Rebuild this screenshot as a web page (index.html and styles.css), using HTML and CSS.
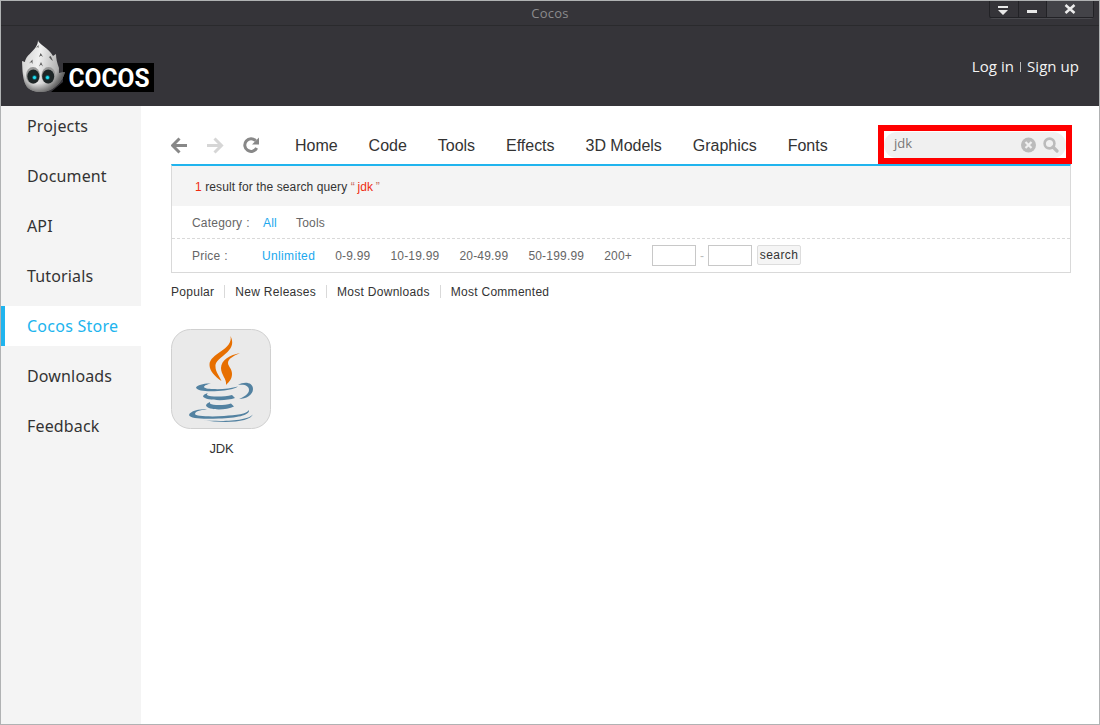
FILE: index.html
```html
<!DOCTYPE html>
<html lang="en">
<head>
<meta charset="utf-8">
<title>Cocos</title>
<link rel="stylesheet" href="styles.css">
</head>
<body>
<div class="window">
  <header class="top">
    <div class="titlebar">
      <span class="title">Cocos</span>
      <div class="controls">
        <span class="ctl"><svg width="28" height="16" viewBox="0 0 28 16"><path d="M8 5h10v2H8zM8 9h10l-5 5z" fill="#e8e8e8"/></svg></span>
        <span class="ctl"><svg width="27" height="16" viewBox="0 0 27 16"><path d="M8 9h10v3H8z" fill="#e8e8e8"/></svg></span>
        <span class="ctl close"><svg width="46" height="16" viewBox="0 0 46 16"><path d="M18.500 4l9 8M27.500 4l-9 8" stroke="#ececec" stroke-width="2.500"/></svg></span>
      </div>
    </div>
    <div class="brandbar">
      <svg class="logo" width="134" height="54" viewBox="0 0 134 54">
        <defs>
          <linearGradient id="flame" x1="0" y1="0" x2="1" y2=".25"><stop offset="0" stop-color="#ccc"/><stop offset=".45" stop-color="#f0f0f0"/><stop offset="1" stop-color="#a5a5a5"/></linearGradient>
          <radialGradient id="shade" cx=".42" cy=".4" r=".66"><stop offset=".66" stop-color="#333" stop-opacity="0"/><stop offset="1" stop-color="#333" stop-opacity=".8"/></radialGradient>
        </defs>
        <path d="M29 52l12-10V23h91v29z" fill="#000"/>
        <path d="M16 0c0 4 11 8 15 16l3-2c0 4 1 9 3 14l0 5 6-1c-2 8-7 13-13 17-7 4-18 4-24-1C2 44 1 36 .5 31L0 21l3 1C4 14 16 10 16 0z" fill="url(#flame)"/>
        <path d="M16 0c0 4 11 8 15 16l3-2c0 4 1 9 3 14l0 5 6-1c-2 8-7 13-13 17-7 4-18 4-24-1C2 44 1 36 .5 31L0 21l3 1C4 14 16 10 16 0z" fill="url(#shade)"/>
        <path d="M7 23.500l3.500-4v4.500l-1.200-2zM17 17l1.700-4 2.300 4-2-1.500zM17 26.500l2-4.500 2 4.500-2-2zM27 17l1.700-1 2.300 5-2-1.500zM14 8l2.500-3v3l-1-1z" fill="#555"/>
        <ellipse cx="11" cy="35.500" rx="7" ry="8.500" fill="#999"/><ellipse cx="26.500" cy="35.500" rx="7" ry="8.500" fill="#999"/>
        <ellipse cx="11.300" cy="36.500" rx="6" ry="7" fill="#1d2526"/><ellipse cx="26.200" cy="36.500" rx="6" ry="7" fill="#1d2526"/>
        <circle cx="12.500" cy="37.500" r="2.300" fill="#087b89"/><circle cx="25.500" cy="37.500" r="2.300" fill="#087b89"/>
        <circle cx="12.500" cy="37.500" r="1.500" fill="#24dff2"/><circle cx="25.500" cy="37.500" r="1.500" fill="#24dff2"/>
        <text class="wordmark" x="46.500" y="47" textLength="81" lengthAdjust="spacingAndGlyphs">COCOS</text>
      </svg>
      <div class="account"><span>Log in</span><i></i><span>Sign up</span></div>
    </div>
  </header>
  <div class="body">
    <nav class="side">
      <a>Projects</a><a>Document</a><a>API</a><a>Tutorials</a><a class="active">Cocos Store</a><a>Downloads</a><a>Feedback</a>
    </nav>
    <main class="main">
      <div class="toolbar">
        <div class="history">
          <svg width="17" height="17" viewBox="0 0 17 17" fill="none" stroke="#888" stroke-width="3"><path d="M2 8.500h14M8.500 1.500l-7 7 7 7"/></svg>
          <svg width="17" height="17" viewBox="0 0 17 17" fill="none" stroke="#d6d6d6" stroke-width="3"><path d="M0 8.500h14M7.500 1.500l7 7-7 7"/></svg>
          <svg width="17" height="17" viewBox="0 0 17 17"><path d="M12.700 3.800A6.300 6.300 0 1 0 13.700 11" fill="none" stroke="#888" stroke-width="3"/><path d="M16 .5v7H9z" fill="#888"/></svg>
        </div>
        <nav class="tabs"><a>Home</a><a>Code</a><a>Tools</a><a>Effects</a><a>3D Models</a><a>Graphics</a><a>Fonts</a></nav>
        <div class="searchbox">
          <div class="field"><span>jdk</span>
            <svg width="38" height="17" viewBox="0 0 38 17"><circle cx="7.500" cy="8" r="7.500" fill="#bbb"/><path d="M4.500 5l6 6M10.500 5l-6 6" stroke="#f0f0f0" stroke-width="2.200"/><circle cx="28.500" cy="6.500" r="4.900" fill="none" stroke="#bbb" stroke-width="2.600"/><path d="M32 10l4 4" stroke="#bbb" stroke-width="3.200" stroke-linecap="round"/></svg>
          </div>
        </div>
      </div>
      <section class="panel">
        <div class="result"><b>1</b> result for the search query <q>“ <b>jdk</b> ”</q></div>
        <div class="filter category"><span class="label">Category<em>:</em></span><a class="on">All</a><a>Tools</a></div>
        <div class="filter price"><span class="label">Price<em>:</em></span><a class="on">Unlimited</a><a>0-9.99</a><a>10-19.99</a><a>20-49.99</a><a>50-199.99</a><a>200+</a>
          <div class="range"><input type="text"><span>-</span><input type="text"><button>search</button></div>
        </div>
      </section>
      <div class="sort"><a>Popular</a><a>New Releases</a><a>Most Downloads</a><a>Most Commented</a></div>
      <div class="item">
        <svg class="java" width="100" height="100" viewBox="0 0 100 100">
          <rect x=".5" y=".5" width="99" height="99" rx="19" fill="#eaeaea" stroke="#d0d0d0"/>
          <g fill="#e76f00"><path d="M59.500 7c3 6 2 11-3 16-6 6-13 9-12 15 0 5 4 9 6 14-6-4-12-10-12-16 0-12 24-15 21-29z"/><path d="M69 24c-7 3-12 6-12 10 0 3 4 6 4 11 0 5-3 8-6 11 1-6-5-10-5-17 0-8 9-13 19-15z"/></g>
          <g fill="#5382a1"><path d="M40 54.500c-6-.5-14 1.500-15 4 1 4 13 4 22 3.500 9-.5 16-2 20-4.500-7 2-17 3-25 2.500-5 0-9-1-9-2 0-1.500 4-3 7-3.500z"/><path d="M67 56c6-4 15-3 15 4 0 6-7 10-14 10 5-2 10-5 10-9s-4-6-11-5z"/><path d="M37 64c-3 1-5 2-5 3.500 2 4 23 5 32 1.500l-3-3c-8 2-22 2-25 0 0-1 0-1 1-2z"/><path d="M39 73c-2 1-4 2-4 3.500 2 5 20 5 28 1l-3-3c-7 2-18 2-21 0z"/><path d="M36 80c-8 0-17 2-18 6 1 4 15 4 30 3.500 17-.5 31-3 30-8.500-2 4-13 5-25 6-15 1-29 0-29-2 0-3 7-4 12-5z"/><path d="M82 85c-2 8-27 10-51 6 20 2 47 1 51-6z"/></g>
        </svg>
        <span>JDK</span>
      </div>
    </main>
  </div>
</div>
</body>
</html>
```
FILE: styles.css
```css
* { box-sizing: border-box; }
body { margin: 0; font-family: "Liberation Sans", Arial, sans-serif; color: #333; }
svg { display: block; flex: none; }
.window { width: 1100px; height: 725px; border: 1px solid #b0b2b3; background: #fff; display: flex; flex-direction: column; overflow: hidden; }
.top { height: 105px; background: #353439; flex: none; color: #fff; }
.titlebar { height: 25px; border-bottom: 1px solid #2a2a2d; display: grid; grid-template-columns: 1fr auto 1fr; align-items: start; }
.title { grid-column: 2; font: 13px/24px "Open Sans", sans-serif; letter-spacing: .25px; color: #8b8b8d; }
.controls { grid-column: 3; justify-self: end; display: flex; margin-right: 5px; border: 1px solid #222226; border-top: 0; border-bottom: 1px solid #4a4a4f; border-radius: 0 0 4px 4px; height: 18px; }
.ctl { border-right: 1px solid #222226; border-bottom: 1px solid #222226; }
.ctl.close { background: #434348; border-right: 0; }
.brandbar { height: 80px; padding: 0 20px 0 21px; display: flex; justify-content: space-between; }
.logo { margin-top: 14px; }
.wordmark { font: bold 26px Roboto, sans-serif; fill: #fff; }
.account { display: flex; align-items: center; height: 22px; margin-top: 29px; font: 15px/22px "Open Sans", sans-serif; letter-spacing: .05px; color: #f3f3f3; }
.account i { width: 1px; height: 10px; background: #bbb; margin: 2px 6px 0; }
.body { display: flex; flex: 1; }
.side { width: 140px; background: #f4f4f4; display: flex; flex-direction: column; gap: 10px; }
.side a { height: 40px; padding-left: 26px; font: 16px/40px "Noto Sans", sans-serif; letter-spacing: .15px; color: #333; }
.side .active { background: #fff; border-left: 4px solid #20b4ee; padding-left: 22px; color: #20b4ee; letter-spacing: .25px; }
.main { flex: 1; padding: 19px 28px 0 30px; }
.toolbar { height: 39px; display: flex; }
.history { display: flex; gap: 19px; padding-top: 12px; width: 124px; }
.tabs { display: flex; gap: 31px; font-size: 16px; letter-spacing: -.02px; line-height: 42px; flex: 1; }
.searchbox { position: relative; z-index: 1; width: 194px; height: 39px; border: 6px solid #f00; margin-right: -1px; }
.field { height: 26px; margin-top: 1px; border-radius: 13px; background: #f0f0f0; padding: 0 7px 0 10px; display: flex; justify-content: space-between; align-items: center; font: 13px/22px "Open Sans", sans-serif; color: #777; }
.field span { height: 26px; }
.panel { width: 900px; height: 109px; border: 1px solid #d9d9d9; border-top: 2px solid #20b4ee; font-size: 12px; color: #666; }
.result { height: 40px; line-height: 42px; padding-left: 23px; background: #f4f4f4; color: #333; letter-spacing: .1px; white-space: nowrap; }
.result b { font-weight: normal; color: #f02b10; }
.result q { quotes: none; color: #c66a60; word-spacing: -.8px; }
.filter { display: flex; align-items: center; gap: 20px; padding-left: 20px; letter-spacing: .3px; }
.filter .label { width: 50px; white-space: nowrap; }
.label em { font-style: normal; padding-left: 4px; }
.category { height: 33px; padding-top: 2px; border-bottom: 1px dashed #d9d9d9; letter-spacing: .2px; }
.category .label { width: 51px; }
.category .on { margin-right: -1px; }
.price { height: 33px; letter-spacing: .2px; }
.price .on { letter-spacing: .35px; }
.on { color: #20a8ee; }
.range { display: flex; align-items: center; }
.range span { width: 12px; text-align: center; color: #bbb; }
.range input { width: 44px; height: 21px; border: 1px solid #c8c8c8; padding: 0; background: #fff; }
.range button { width: 44px; height: 20px; margin: -1px 0 0 5px; border: 1px solid #ddd; border-radius: 2px; background: #f5f5f5; padding: 1px 0 0; font: 12px/17px "Liberation Sans", sans-serif; letter-spacing: .4px; color: #333; }
.sort { display: flex; align-items: center; margin-top: 12px; height: 13px; font-size: 12px; letter-spacing: .28px; line-height: 15px; color: #333; }
.sort a { height: 13px; padding: 0 10px; border-left: 1px solid #d9d9d9; }
.sort a:first-child { padding-left: 0; border: 0; }
.item { width: 100px; margin-top: 31px; text-align: center; font-size: 13px; line-height: 15px; }
.item span { display: block; margin: 12px 0 0 1px; letter-spacing: -.2px; }
```
